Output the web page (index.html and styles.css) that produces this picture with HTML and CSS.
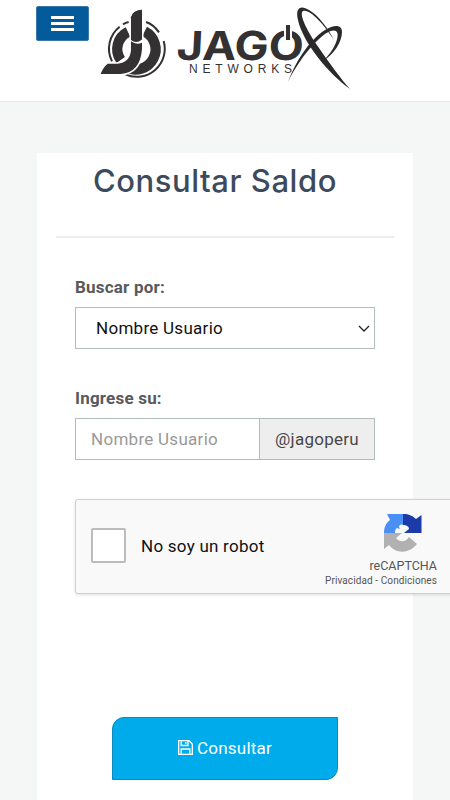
FILE: index.html
```html
<!DOCTYPE html>
<html lang="es">
<head>
<meta charset="utf-8">
<meta name="viewport" content="width=device-width">
<title>Consultar Saldo</title>
<link rel="stylesheet" href="styles.css">
</head>
<body>
<header class="header">
  <button class="menu" type="button" aria-label="Menu"><span></span><span></span><span></span></button>
  <svg class="logo" viewBox="98 0 256 92" aria-label="Jago Networks">
    <g transform="translate(90 0) scale(.3333)" fill="none" stroke="#343132">
      <g stroke-width="31">
        <path d="M114 96A57 57 0 0 0 92 180"/>
        <path d="M164 94A58 58 0 0 1 108 202"/>
      </g>
      <g stroke-width="6">
        <path d="M89 80A84 84 0 0 0 66 184M99 73Q107 68 116 66M168 66Q190 73 207 97M221 123A84 84 0 0 1 106 223"/>
      </g>
      <path d="M123 120V52Q128 31 156 29V118Q140 132 123 120Z" fill="#343132" stroke="#fff" stroke-width="9" paint-order="stroke"/>
      <path d="M156 128V148Q150 219 92 222H32Q39 202 53 191H82Q120 188 123 150V124Q139 136 156 128Z" fill="#343132" stroke="#fff" stroke-width="9" paint-order="stroke"/>
      <path d="M123 120V52Q128 31 156 29V118Q140 132 123 120Z" fill="#343132" stroke="none"/>
    </g>
    <text class="wordmark" transform="translate(176 60) skewX(-3)" textLength="127" lengthAdjust="spacingAndGlyphs">JAGO</text>
    <path d="M284 24h8v20h-8z" fill="#fff"/>
    <path d="M286 25h4v15h-4z" fill="#343132"/>
    <text class="networks" x="189" y="72.500" textLength="103">NETWORKS</text>
    <g fill="#2b292a">
      <path d="M350 89C329 74 303 43 298 20C295 7 301 5 309 10C318 15 328 28 334 40C324 24 309 8 303 11C298 14 309 34 319 48C330 64 341 79 350 89Z"/>
      <path d="M288 82C295 63 309 40 325 30C335 24 342 25 342 32C342 42 334 54 323 61C334 51 341 35 336 31C328 27 311 46 301 60C296 67 291 75 288 82Z"/>
    </g>
  </svg>
</header>
<main class="card">
  <h1>Consultar Saldo</h1>
  <form class="form">
    <label for="by">Buscar por:</label>
    <div class="select-wrap">
      <select id="by"><option>Nombre Usuario</option></select>
      <svg class="chevron" viewBox="0 0 12 8"><path d="M1 1l5 5 5-5"/></svg>
    </div>
    <label for="user">Ingrese su:</label>
    <div class="group">
      <input id="user" type="text" placeholder="Nombre Usuario"><span class="addon">@jagoperu</span>
    </div>
    <div class="captcha">
      <span class="check"></span>
      <span class="robot">No soy un robot</span>
      <div class="brand">
        <svg viewBox="0 0 38 38">
          <path d="M0 19C0 13 2 9 6 6L3 0H19V11C17 10 15 11 15 13L16 15L13 14C11 15 11 17 11 19Z" fill="#4a90f4"/>
          <path d="M19 0C25 0 29 2 32 5L37.500 1V19H20L25 15C25 12 22 11 19 11Z" fill="#1b3baa"/>
          <path d="M0 19H18L12 24C16 29 22 28 25 23L33 30C25 40 12 40 5 31L0 35Z" fill="#b1b1b1"/>
        </svg>
        <span class="name">reCAPTCHA</span>
        <span class="terms">Privacidad - Condiciones</span>
      </div>
    </div>
    <button class="submit" type="button">
      <svg viewBox="0 0 15 15"><path d="M.7.7H11L14.300 4V14.300H.7ZM3.200 1V5.500H10V1M3.200 14V9H11.800V14M7.800 2V4"/></svg>
      <span>Consultar</span>
    </button>
  </form>
</main>
</body>
</html>
```
FILE: styles.css
```css
* { box-sizing: border-box; }
body {
  margin: 0;
  height: 800px;
  overflow: hidden;
  background: #f4f7f6;
  font: 17px Roboto, sans-serif;
}
.header {
  display: flex;
  align-items: flex-start;
  height: 102px;
  padding-left: 36px;
  background: #fff;
  border-bottom: 1px solid #e5e9e8;
}
.menu {
  display: flex;
  flex-direction: column;
  align-items: center;
  justify-content: center;
  gap: 3px;
  width: 53px;
  height: 35px;
  margin-top: 6px;
  padding: 0;
  border: 1px solid #3c78a8;
  border-radius: 2px;
  background: #035b9b;
}
.menu span { width: 23px; height: 3.300px; background: #fff; }
.logo { width: 256px; height: 92px; margin-left: 9px; }
.wordmark { font: 700 40px Inter, sans-serif; fill: #343132; }
.networks { font: 500 12px "Liberation Sans", sans-serif; fill: #343132; }
.card {
  width: 376px;
  height: 650px;
  margin: 51px 0 0 37px;
  padding: 0 19px;
  background: #fff;
}
h1 {
  height: 85px;
  margin: 0;
  padding: 8px 20px 0 0;
  border-bottom: 2px solid #ececec;
  color: #3d4a5c;
  font: 450 31px/40px Inter, sans-serif;
  letter-spacing: .55px;
  text-align: center;
  white-space: nowrap;
}
.form { display: flex; flex-direction: column; padding: 38px 19px 0; }
label { height: 31px; color: #58595b; font-weight: 700; line-height: 22px; letter-spacing: .2px; }
.select-wrap { position: relative; height: 42px; margin-bottom: 38px; }
select {
  width: 100%;
  height: 100%;
  padding: 0 20px;
  border: 1px solid #b4bcba;
  border-radius: 0;
  background: #fff;
  color: #111;
  font: 17px Roboto, sans-serif;
  letter-spacing: .28px;
  appearance: none;
}
.chevron {
  position: absolute;
  right: 5px;
  top: 18px;
  width: 12px;
  height: 8px;
  fill: none;
  stroke: #222;
  stroke-width: 1.300;
}
.group { display: flex; height: 42px; }
.group input {
  width: 185px;
  padding: 0 15px;
  border: 1px solid #b4bcba;
  border-radius: 0;
  font: 17px Roboto, sans-serif;
  letter-spacing: .28px;
}
.group input::placeholder { color: #999; }
.addon {
  flex: 1;
  border: 1px solid #b4bcba;
  border-left: 0;
  background: #eee;
  color: #484848;
  line-height: 40px;
  letter-spacing: .25px;
  text-align: center;
}
.captcha {
  display: flex;
  align-items: center;
  width: 396px;
  height: 95px;
  margin-top: 39px;
  padding-left: 15px;
  border: 1px solid #d0d0d0;
  border-radius: 3px;
  background: #f9f9f9;
  box-shadow: 0 1px 3px rgba(0, 0, 0, .12);
}
.check {
  width: 35px;
  height: 35px;
  margin-top: -2px;
  border: 2px solid #bcbcbc;
  border-radius: 2px;
  background: #fff;
}
.robot { width: 180px; margin: -2px 0 0 15px; color: #111; letter-spacing: .25px; }
.brand {
  display: flex;
  flex-direction: column;
  align-items: flex-end;
  align-self: flex-start;
  width: 116px;
  padding-top: 14px;
  color: #555;
}
.brand svg { width: 38px; height: 38px; margin-right: 15px; }
.name { margin-top: 5px; font-size: 12.500px; line-height: 17px; }
.terms { margin-top: 1px; font-size: 10px; line-height: 12px; letter-spacing: .1px; white-space: nowrap; }
.submit {
  display: flex;
  align-items: center;
  justify-content: center;
  gap: 4px;
  width: 226px;
  height: 63px;
  margin: 123px auto 0;
  padding: 0 0 2px;
  border: 1px solid #078bc0;
  border-radius: 12px 0;
  background: #00abec;
  color: #fff;
  font: 17px Roboto, sans-serif;
  letter-spacing: .25px;
}
.submit svg { width: 15px; height: 15px; fill: none; stroke: #fff; stroke-width: 1.300; }
```
